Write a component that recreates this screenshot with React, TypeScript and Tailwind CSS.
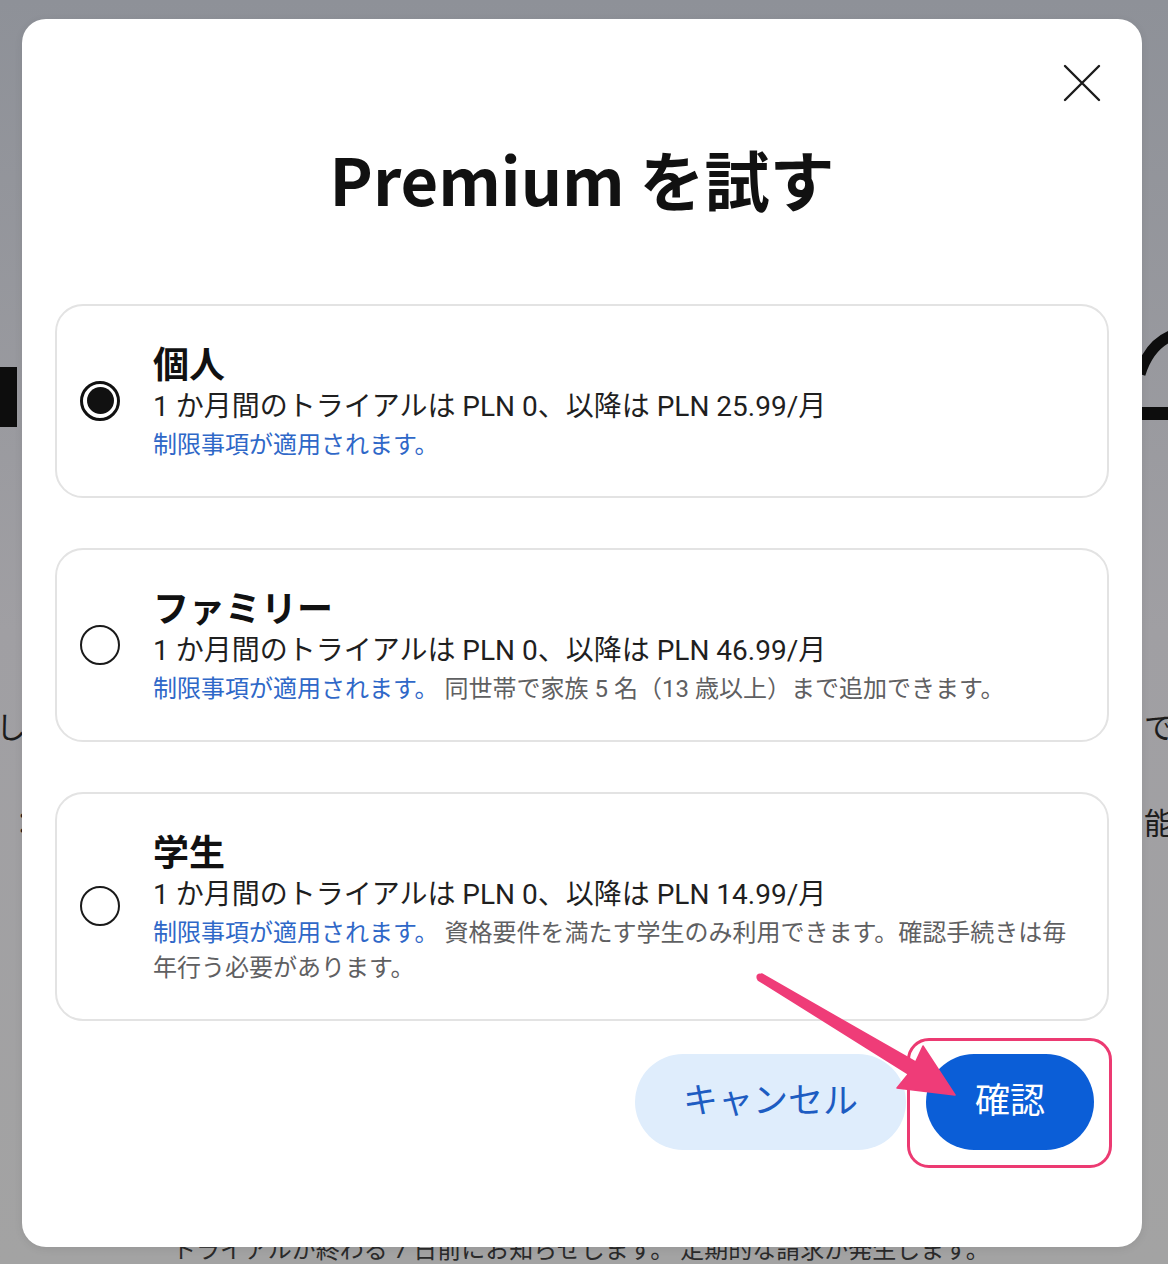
import React from "react";

const bodyFont = "font-[family-name:Roboto,'Noto_Sans_CJK_JP',sans-serif]";

function Radio({ selected }: { selected?: boolean }) {
  if (selected) {
    return (
      <div className="flex h-[40px] w-[40px] shrink-0 items-center justify-center rounded-full border-[3px] border-[#111]">
        <div className="h-[27px] w-[27px] rounded-full bg-[#111]" />
      </div>
    );
  }
  return <div className="h-[40px] w-[40px] shrink-0 rounded-full border-[2.5px] border-[#1a1a1a]" />;
}

function Plan({
  selected,
  title,
  price,
  extra,
}: {
  selected?: boolean;
  title: string;
  price: string;
  extra?: React.ReactNode;
}) {
  return (
    <div className="flex items-center rounded-[28px] border-2 border-[#e3e3e3] pb-[33px] pl-[23px] pr-[28px] pt-[32px]">
      <Radio selected={selected} />
      <div className="ml-[33px] flex-1">
        <div className="font-[family-name:'Noto_Sans_CJK_JP',sans-serif] text-[36px] font-bold leading-[48px] text-[#111]">
          {title}
        </div>
        <div className="text-[28px] leading-[42px] text-[#1f1f1f]">{price}</div>
        <div className="text-[24px] leading-[35px]">
          <span className="text-[#2f68c8]">制限事項が適用されます。</span>
          {extra ? <span className="text-[#5f6062]"> {extra}</span> : null}
        </div>
      </div>
    </div>
  );
}

export default function App() {
  return (
    <div
      className={`relative h-[1264px] w-[1168px] overflow-hidden bg-gradient-to-b from-[#8e9198] via-[#a09fa3] to-[#a3a3a3] ${bodyFont}`}
    >
      {/* dimmed page behind the dialog */}
      <div className="flex h-full flex-col text-[#1c1c1c]">
        <div className="h-[300px]" />
        <div className="flex h-[130px] justify-between">
          <div className="mt-[67px] h-[60px] w-[17px] bg-[#0d0d0d]" />
          <svg width="26" height="130" viewBox="0 0 26 130">
            <path d="M 34 34 Q 8 42 -2 74" fill="none" stroke="#0d0d0d" strokeWidth="11" />
            <rect x="0" y="107" width="26" height="13" fill="#0d0d0d" />
          </svg>
        </div>
        <div className="h-[280px]" />
        <div className="flex h-[36px] items-center justify-between overflow-hidden text-[30px] leading-[36px]">
          <span className="-ml-[4px]">し</span>
          <span className="-mr-[8px] w-[32px]">で</span>
        </div>
        <div className="h-[60px]" />
        <div className="flex h-[36px] items-center justify-between overflow-hidden text-[30px] leading-[36px]">
          <span className="ml-[8px]">：</span>
          <span className="-mr-[8px] w-[32px]">能</span>
        </div>
        <div className="flex-1" />
        <div className="h-[28px] pl-[172px] text-[24px] leading-[28px] text-[#2a2a2a]">
          トライアルが終わる 7 日前にお知らせします。 定期的な請求が発生します。
        </div>
      </div>

      {/* dialog */}
      <div className="absolute left-[22px] top-[19px] flex h-[1228px] w-[1120px] flex-col rounded-[24px] bg-white px-[33px] pt-[44px] shadow-[0_2px_8px_rgba(0,0,0,0.08)]">
        <div className="flex justify-end pr-[7px]">
          <button className="flex h-[40px] w-[40px] items-center justify-center">
            <svg width="38" height="38" viewBox="0 0 38 38">
              <path d="M2 2 L36 36 M36 2 L2 36" stroke="#1b1b1b" strokeWidth="2.4" strokeLinecap="round" />
            </svg>
          </button>
        </div>
        <h1 className="mt-[35px] text-center font-[family-name:'Noto_Sans_CJK_JP',sans-serif] text-[65px] font-bold leading-[80px] text-[#111]">
          Premium を試す
        </h1>
        <div className="mt-[86px] flex flex-col gap-[50px]">
          <Plan selected title="個人" price="1 か月間のトライアルは PLN 0、以降は PLN 25.99/月" />
          <Plan
            title="ファミリー"
            price="1 か月間のトライアルは PLN 0、以降は PLN 46.99/月"
            extra="同世帯で家族 5 名（13 歳以上）まで追加できます。"
          />
          <Plan
            title="学生"
            price="1 か月間のトライアルは PLN 0、以降は PLN 14.99/月"
            extra={
              <>
                資格要件を満たす学生のみ利用できます。確認手続きは毎
                <br />
                年行う必要があります。
              </>
            }
          />
        </div>
        <div className="mt-[33px] flex justify-end gap-[20px] pr-[15px]">
          <button className="h-[96px] w-[271px] rounded-full bg-[#dfedfc] text-[35px] text-[#1d5cc2]">
            キャンセル
          </button>
          <div className="relative">
            <button className="h-[96px] w-[168px] rounded-full bg-[#0b5ed7] text-[35px] text-white">確認</button>
            <div className="pointer-events-none absolute -bottom-[18px] -left-[19px] -right-[18px] -top-[16px] rounded-[22px] border-[3.5px] border-[#ec3a72]" />
          </div>
        </div>
      </div>

      {/* annotation arrow */}
      <svg
        className="pointer-events-none absolute left-0 top-0"
        width="1168"
        height="1264"
        viewBox="0 0 1168 1264"
      >
        <circle cx="760" cy="977" r="3.6" fill="#ef3c78" />
        <polygon
          points="761.8,974 915.6,1062 923,1046 955,1095 897,1088 908.4,1074 758.2,980"
          fill="#ef3c78"
          strokeLinejoin="round"
          stroke="#ef3c78"
          strokeWidth="1.5"
        />
      </svg>
    </div>
  );
}
